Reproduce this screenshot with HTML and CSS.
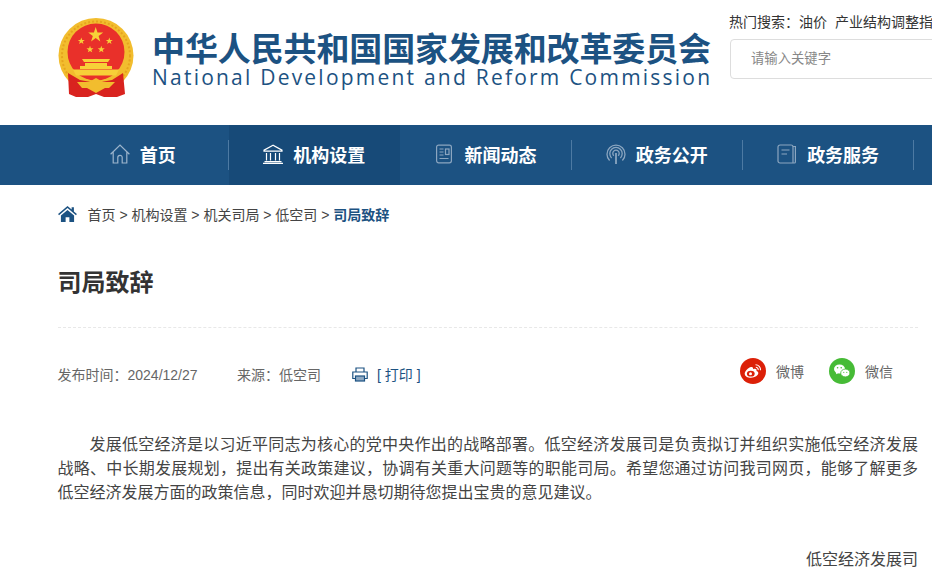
FILE: index.html
```html
<!DOCTYPE html>
<html lang="zh-CN">
<head>
<meta charset="utf-8">
<title>司局致辞</title>
<link rel="stylesheet" href="styles.css">
</head>
<body>
<header class="header">
  <svg class="emblem" width="76" height="80" viewBox="0 0 76 80">
    <circle cx="38" cy="37.5" r="37.5" fill="#f2bd2e"/>
    <circle cx="38" cy="37.5" r="34" fill="none" stroke="#e6a41e" stroke-width="2" stroke-dasharray="2 2"/>
    <circle cx="38" cy="34" r="28.5" fill="#e9302a"/>
    <g fill="#f7d038">
      <polygon points="37.7,9 39.5,14.5 45.2,14.5 40.6,17.9 42.3,23.4 37.7,20 33.1,23.4 34.8,17.9 30.2,14.5 35.9,14.5"/>
      <polygon points="23.3,19.5 24.2,22 26.8,22 24.7,23.6 25.5,26 23.3,24.6 21.1,26 21.9,23.6 19.8,22 22.4,22"/>
      <polygon points="51.3,19.5 52.2,22 54.8,22 52.7,23.6 53.5,26 51.3,24.6 49.1,26 49.9,23.6 47.8,22 50.4,22"/>
      <polygon points="32,27.8 32.9,30.3 35.5,30.3 33.4,31.9 34.2,34.3 32,32.9 29.8,34.3 30.6,31.9 28.5,30.3 31.1,30.3"/>
      <polygon points="43.3,27.8 44.2,30.3 46.8,30.3 44.7,31.9 45.5,34.3 43.3,32.9 41.1,34.3 41.9,31.9 39.8,30.3 42.4,30.3"/>
      <path d="M24 41h28l-2 3H26zM27 45h22v3H27zM22 48h32v3H22zM15 51.5h46l-3 6H18z"/>
    </g>
    <path d="M10 55l12 7 16 3 16-3 11-7 2 21-8 3H46l-8-3-8 3H18l-7-3z" fill="#d9231f"/>
    <path d="M19 64h12l7-4 7 4h12l-6 6H47l-9 5-9-5h-5z" fill="#f2bd2e"/>
  </svg>
  <div class="brand">
    <div class="brand-cn">中华人民共和国国家发展和改革委员会</div>
    <div class="brand-en">National Development and Reform Commission</div>
  </div>
  <div class="search-area">
    <div class="hot"><span>热门搜索：</span><span class="hot-item">油价</span><span class="hot-item">产业结构调整指导目录</span></div>
    <div class="search-box">请输入关键字</div>
  </div>
</header>

<nav class="nav">
  <a class="nav-item">
    <svg class="nav-icon" width="20" height="20" viewBox="0 0 20 20" fill="none" stroke="#9db5cc" stroke-width="1.2"><path d="M0.6 10.2 10 1l9.400 9.200M3.200 8.200V19h4.600v-5.500a2.200 2.200 0 0 1 4.400 0V19h4.600V8.200"/></svg>
    <span>首页</span>
  </a>
  <a class="nav-item active">
    <svg class="nav-icon" width="20" height="20" viewBox="0 0 20 20" fill="none" stroke="#fff" stroke-width="1.2"><path d="M10 1.200 1 6.200v1h18v-1zM3.500 9v7.500M7.500 9v7.500M12.500 9v7.500M16.500 9v7.500M1.500 17.600h17M0 19.400h20"/></svg>
    <span>机构设置</span>
  </a>
  <a class="nav-item">
    <svg class="nav-icon" width="20" height="20" viewBox="0 0 20 20" fill="none" stroke="#8ba6c0" stroke-width="1.2"><rect x="2.600" y="1.200" width="14.800" height="17.600" rx="2"/><path d="M5.500 5h4M5.500 8h4M5.500 11h4M5.500 14.500h9"/><rect x="11.500" y="5" width="3.500" height="5.500"/></svg>
    <span>新闻动态</span>
  </a>
  <a class="nav-item">
    <svg class="nav-icon" width="20" height="20" viewBox="0 0 20 20" fill="none" stroke="#8ba6c0" stroke-width="1.3"><path d="M3.600 16.500a9 9 0 1 1 12.800 0M5.600 14a6.200 6.200 0 1 1 8.800 0M7.800 11.700a3.200 3.200 0 1 1 4.400 0"/><path d="M10 9v11" stroke-width="1.8"/></svg>
    <span>政务公开</span>
  </a>
  <a class="nav-item">
    <svg class="nav-icon" width="20" height="20" viewBox="0 0 20 20" fill="none" stroke="#8ba6c0" stroke-width="1.2"><path d="M16 2.500h2.400V18a1 1 0 0 1-1 1H3a2 2 0 0 1-2-2V3a2 2 0 0 1 2-2h11a2 2 0 0 1 2 2v16"/><path d="M4.500 6h8M4.500 10h5.500"/></svg>
    <span>政务服务</span>
  </a>
</nav>

<main class="main">
  <div class="crumbs">
    <svg class="crumb-home" width="19" height="16" viewBox="0 0 20 17"><path fill="#1c5282" d="M10 0 0 8.600l1 1.200L10 2.200l9 7.600 1-1.200-3.200-2.800V1.200h-2.400v2.400zM3 10.200V17h5v-5h4v5h5v-6.800L10 4.200z"/></svg>
    <span>首页 &gt; 机构设置 &gt; 机关司局 &gt; 低空司 &gt; </span><strong class="crumb-current">司局致辞</strong>
  </div>
  <h1 class="title">司局致辞</h1>
  <div class="meta">
    <span class="meta-date">发布时间：2024/12/27</span>
    <span class="meta-source">来源：低空司</span>
    <span class="print">
      <svg width="16" height="15" viewBox="0 0 16 15" fill="none" stroke="#1c5282" stroke-width="1.2"><path d="M4 5V1h8v4M3.500 11.500H.8V5h14.400v6.500H12.500"/><rect x="3.500" y="9" width="9" height="5" fill="#8fa9c2"/></svg>
      <span>[ 打印 ]</span>
    </span>
    <div class="share">
      <span class="share-item">
        <svg width="26" height="26" viewBox="0 0 26 26"><circle cx="13" cy="13" r="13" fill="#dc2008"/><path fill="#fff" d="M11 19.800c-3.500 0-6.300-1.700-6.300-4.100 0-2.400 3.400-6.200 6.400-6.700 1.700-.3 2.300 .8 1.900 2.200 1.300-.5 3-.6 3.500 .3 .3 .6 .1 1.100-.1 1.500 1.100 .3 1.900 1 1.900 2.100 0 2.500-3.400 4.700-7.300 4.700z"/><ellipse cx="10.800" cy="15.700" rx="3.900" ry="2.900" fill="#dc2008"/><circle cx="10.500" cy="15.800" r="1.500" fill="#fff"/><path d="M15.500 6.800a5 5 0 0 1 5 5.500M15.800 9.300a2.500 2.500 0 0 1 2.400 2.800" fill="none" stroke="#fff" stroke-width="1.100"/></svg>
        <span>微博</span>
      </span>
      <span class="share-item">
        <svg width="26" height="26" viewBox="0 0 26 26"><circle cx="13" cy="13" r="13" fill="#46bb36"/><ellipse cx="10.500" cy="11" rx="5.500" ry="4.600" fill="#fff"/><path fill="#fff" d="M7.500 14l-.6 2.200 2.600-1.300z"/><ellipse cx="16.300" cy="15" rx="4.600" ry="3.900" fill="#fff" stroke="#46bb36" stroke-width=".8"/><circle cx="8.600" cy="9.800" r=".8" fill="#46bb36"/><circle cx="12.200" cy="9.800" r=".8" fill="#46bb36"/><circle cx="14.800" cy="14.300" r=".6" fill="#46bb36"/><circle cx="17.800" cy="14.300" r=".6" fill="#46bb36"/></svg>
        <span>微信</span>
      </span>
    </div>
  </div>
  <article class="article">
    <p class="para">发展低空经济是以习近平同志为核心的党中央作出的战略部署。低空经济发展司是负责拟订并组织实施低空经济发展战略、中长期发展规划，提出有关政策建议，协调有关重大问题等的职能司局。希望您通过访问我司网页，能够了解更多低空经济发展方面的政策信息，同时欢迎并恳切期待您提出宝贵的意见建议。</p>
    <p class="sign">低空经济发展司</p>
  </article>
</main>
</body>
</html>
```
FILE: styles.css
```css
* { box-sizing: border-box; }
html, body { margin: 0; padding: 0; overflow: hidden; height: 100%; }
body {
  width: 932px;
  background: #fff;
  color: #333;
  font-family: "Liberation Sans", "Noto Sans CJK SC", sans-serif;
}
.header {
  display: flex;
  height: 125px;
  padding-left: 58px;
  overflow: hidden;
}
.emblem { flex: none; margin-top: 18px; }
.brand { flex: none; width: 596px; margin-left: 18px; padding-top: 33px; }
.brand-cn {
  color: #1c5282;
  font-size: 33px;
  font-weight: 700;
  letter-spacing: -.12px;
  line-height: 34px;
  white-space: nowrap;
}
.brand-en {
  color: #1c5282;
  font-family: "Open Sans", sans-serif;
  font-size: 21px;
  letter-spacing: 2.22px;
  line-height: 20px;
  white-space: nowrap;
}
.search-area { flex: none; width: 320px; margin-left: -19px; padding-top: 12px; }
.hot { font-size: 14px; line-height: 20px; white-space: nowrap; color: #333; }
.hot-item { margin-right: 8px; }
.search-box {
  width: 300px;
  height: 40px;
  margin: 7px 0 0 1px;
  padding-left: 20px;
  border: 1px solid #ddd;
  border-radius: 4px;
  color: #888;
  font-size: 13.333px;
  line-height: 38px;
}
.nav {
  display: flex;
  height: 60px;
  padding-left: 57.67px;
  background: #1c5282;
  overflow: hidden;
}
.nav-item {
  position: relative;
  flex: none;
  display: flex;
  align-items: center;
  justify-content: center;
  gap: 10px;
  width: 171.33px;
  padding: 0 1px 3px 0;
  color: #fff;
  font-size: 18px;
  font-weight: 700;
}
.nav-item::after {
  content: "";
  position: absolute;
  top: 15px;
  right: 0;
  width: 1px;
  height: 30px;
  background: #4d7aa3;
}
.nav-item.active { background: #174a78; }
.nav-item.active::after { display: none; }
.nav-icon { flex: none; }
.main { width: 860.5px; margin-left: 57.5px; }
.crumbs {
  display: flex;
  align-items: center;
  height: 20px;
  margin-top: 19px;
  color: #444;
  font-size: 14px;
  white-space: pre;
}
.crumb-home { margin-right: 11px; }
.crumb-current { color: #1c5282; font-weight: 700; }
.title {
  margin: 44px 0 0;
  height: 60px;
  border-bottom: 1px dashed #e8e8e8;
  color: #333;
  font-size: 24px;
  font-weight: 700;
  line-height: 30px;
}
.meta {
  display: flex;
  align-items: center;
  height: 26px;
  margin-top: 30px;
  color: #666;
  font-size: 14px;
}
.meta-date { width: 179.5px; padding-top: 6px; }
.meta-source { width: 115px; padding-top: 6px; }
.print { display: flex; align-items: center; gap: 9px; color: #1c5282; padding-top: 6px; }
.share { display: flex; gap: 25px; margin-left: auto; margin-right: 25px; }
.share-item { display: flex; align-items: center; gap: 10px; }
.article { margin-top: 49px; font-size: 16px; line-height: 24px; color: #444; }
.para { margin: 0; text-indent: 2em; text-align: justify; }
.sign { margin: 43px 0 0; text-align: right; }
```
